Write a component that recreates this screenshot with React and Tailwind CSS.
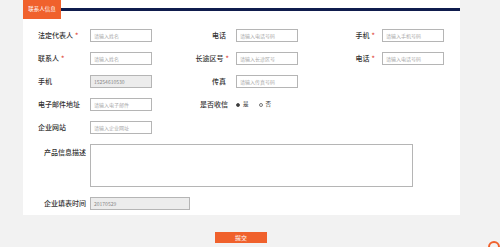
import React from "react";

const font = { fontFamily: '"Noto Sans CJK SC", "Noto Sans", sans-serif' };

function Input({ ph, value, w = "w-[62px]", disabled }) {
  return (
    <div
      className={`${w} h-[13px] border border-[#b5b5b5] flex items-center pl-[3px] text-[5px] leading-none ${
        disabled ? "bg-[#ececec] text-[#888]" : "bg-white text-[#aaa]"
      }`}
    >
      {value ?? ph}
    </div>
  );
}

function Label({ children, star, className = "" }) {
  return (
    <div className={`text-[7px] leading-none text-[#333] font-medium whitespace-nowrap ${className}`}>
      {children}
      {star && <span className="text-[#e0473a] ml-[2px]">*</span>}
    </div>
  );
}

function Row({ c1, c2, c3 }) {
  return (
    <div className="flex items-center h-[13px]">
      <div className="w-[52px] pl-[15px] box-content flex items-center">{c1[0]}</div>
      {c1[1]}
      <div className="w-[84px] flex justify-end pr-[7px] box-border">{c2 && c2[0]}</div>
      {c2 && c2[1]}
      {c3 && (
        <>
          <div className="w-[84px] flex justify-end pr-[7px] box-border">{c3[0]}</div>
          {c3[1]}
        </>
      )}
    </div>
  );
}

export default function App() {
  return (
    <div className="w-[500px] h-[247px] bg-[#f2f2f2] overflow-hidden relative" style={font}>
      <div className="ml-[23px] w-[437px] h-[215px] bg-white flex flex-col">
        <div className="flex h-[19px]">
          <div className="w-[38px] h-[19px] bg-[#f0612c] text-white text-[5.5px] flex items-center justify-center leading-none">
            联系人信息
          </div>
          <div className="flex-1 mt-[8px] h-[3px] bg-[#0f1c4d]" />
        </div>
        <div className="flex flex-col gap-[10px] mt-[10px]">
          <Row
            c1={[<Label star>法定代表人</Label>, <Input ph="请输入姓名" />]}
            c2={[<Label className="mr-[3px]">电话</Label>, <Input ph="请输入电话号码" />]}
            c3={[<Label star>手机</Label>, <Input ph="请输入手机号码" />]}
          />
          <Row
            c1={[<Label star>联系人</Label>, <Input ph="请输入姓名" />]}
            c2={[<Label star>长途区号</Label>, <Input ph="请输入长途区号" />]}
            c3={[<Label star>电话</Label>, <Input ph="请输入电话号码" />]}
          />
          <Row
            c1={[<Label>手机</Label>, <Input value="15254610530" disabled />]}
            c2={[<Label className="mr-[3px]">传真</Label>, <Input ph="请输入传真号码" />]}
          />
          <Row
            c1={[<Label>电子邮件地址</Label>, <Input ph="请输入电子邮件" />]}
            c2={[
              <Label className="mr-[1px]">是否收信</Label>,
              <div className="flex items-center text-[5.5px] text-[#333] leading-none">
                <span className="w-[4px] h-[4px] rounded-full border border-[#555] bg-[#333] mr-[3px]" />
                <span>是</span>
                <span className="w-[4px] h-[4px] rounded-full border border-[#777] ml-[10px] mr-[3px]" />
                <span>否</span>
              </div>,
            ]}
          />
          <Row c1={[<Label>企业网站</Label>, <Input ph="请输入企业网址" />]} />
          <div className="flex">
            <div className="w-[46px] pl-[21px] box-content pt-[5px]">
              <Label>产品信息描述</Label>
            </div>
            <div className="w-[323px] h-[43px] border border-[#b5b5b5] bg-white" />
          </div>
          <div className="flex items-center h-[13px]">
            <div className="w-[46px] pl-[21px] box-content">
              <Label>企业填表时间</Label>
            </div>
            <Input value="20170529" disabled w="w-[100px]" />
          </div>
        </div>
      </div>
      <div className="flex mt-[17px] ml-[215px]">
        <div className="w-[52px] h-[11px] bg-[#f0612c] text-white text-[6px] leading-none flex items-center justify-center">
          提交
        </div>
      </div>
      <div className="absolute left-[488px] top-[241px] w-[12px] h-[12px] rounded-full border-[2px] border-[#f0612c]" />
    </div>
  );
}
